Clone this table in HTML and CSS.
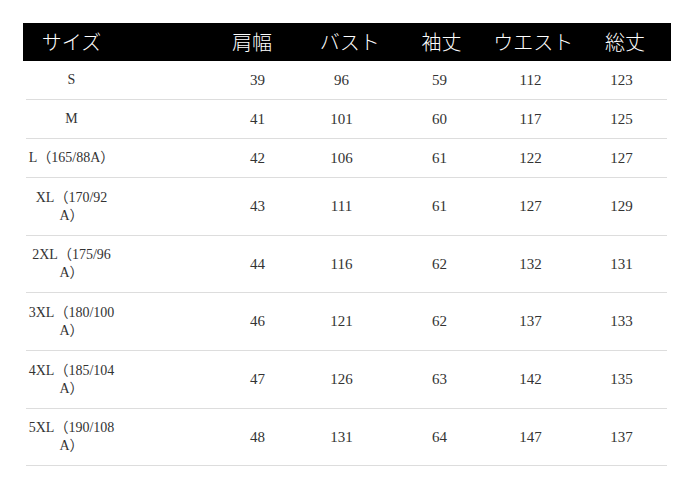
FILE: index.html
```html
<!DOCTYPE html>
<html lang="ja">
<head>
<meta charset="utf-8">
<link rel="stylesheet" href="styles.css">
</head>
<body>
<div class="chart">
  <div class="row head">
    <div class="size">サイズ</div>
    <div class="c c-shoulder">肩幅</div>
    <div class="c">バスト</div>
    <div class="c">袖丈</div>
    <div class="c">ウエスト</div>
    <div class="c">総丈</div>
  </div>
  <div class="row">
    <div class="size">S</div>
    <div class="c">39</div><div class="c c-bust">96</div><div class="c">59</div><div class="c">112</div><div class="c">123</div>
  </div>
  <div class="row">
    <div class="size">M</div>
    <div class="c">41</div><div class="c c-bust">101</div><div class="c">60</div><div class="c">117</div><div class="c">125</div>
  </div>
  <div class="row">
    <div class="size">L（165/88A）</div>
    <div class="c">42</div><div class="c c-bust">106</div><div class="c">61</div><div class="c">122</div><div class="c">127</div>
  </div>
  <div class="row tall">
    <div class="size">XL（170/92<br>A）</div>
    <div class="c">43</div><div class="c c-bust">111</div><div class="c">61</div><div class="c">127</div><div class="c">129</div>
  </div>
  <div class="row tall short">
    <div class="size">2XL（175/96<br>A）</div>
    <div class="c">44</div><div class="c c-bust">116</div><div class="c">62</div><div class="c">132</div><div class="c">131</div>
  </div>
  <div class="row tall">
    <div class="size">3XL（180/100<br>A）</div>
    <div class="c">46</div><div class="c c-bust">121</div><div class="c">62</div><div class="c">137</div><div class="c">133</div>
  </div>
  <div class="row tall">
    <div class="size">4XL（185/104<br>A）</div>
    <div class="c">47</div><div class="c c-bust">126</div><div class="c">63</div><div class="c">142</div><div class="c">135</div>
  </div>
  <div class="row tall short">
    <div class="size">5XL（190/108<br>A）</div>
    <div class="c">48</div><div class="c c-bust">131</div><div class="c">64</div><div class="c">147</div><div class="c">137</div>
  </div>
</div>
</body>
</html>
```

FILE: styles.css
```css
html, body {
  margin: 0;
  padding: 0;
  background: #ffffff;
}

body {
  font-family: "Liberation Serif", "Noto Sans CJK JP", serif;
  color: #333333;
}

.chart {
  width: 648px;
  padding: 23px 0 0 23px;
}

.row {
  display: grid;
  grid-template-columns: 94px 92px repeat(5, 1fr);
  align-items: center;
  height: 39px;
  box-sizing: border-box;
  border-bottom: 1px solid #dddddd;
  font-size: 15px;
  margin: 0 4px 0 3px;
}

.row > .size {
  grid-column: 1;
  text-align: center;
  font-size: 14px;
  line-height: 18px;
  margin-left: -3px;
}

.row > .c:nth-child(2) {
  grid-column: 3;
}

.c {
  text-align: center;
}

.c-bust {
  padding-right: 14px;
}

.row.tall {
  height: 58px;
}

.row.tall.short {
  height: 57px;
}

.row.head {
  margin: 0;
  height: 38px;
  background: #000000;
  color: #ffffff;
  border-bottom: none;
  font-family: "Noto Sans CJK JP", sans-serif;
  font-weight: 300;
  font-size: 20px;
  grid-template-columns: 97px 92px repeat(5, 1fr);
}

.row.head > .size {
  font-size: 20px;
  line-height: 38px;
  margin-left: 0;
}

.row.head > .c {
  line-height: 38px;
}

.c-shoulder {
  padding-right: 12px;
}
```
